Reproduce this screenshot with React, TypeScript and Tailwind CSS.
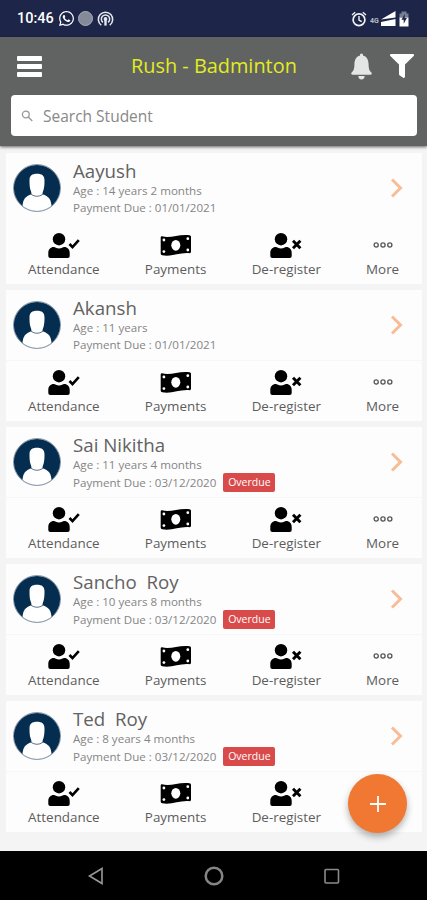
import type { ReactNode } from 'react'
import { FaFilter, FaWhatsapp } from 'react-icons/fa'
import { IoIosNotifications } from 'react-icons/io'

interface Student {
  name: string
  age: string
  due: string
  overdue?: boolean
}

const STUDENTS: Student[] = [
  { name: 'Aayush', age: '14 years 2 months', due: '01/01/2021' },
  { name: 'Akansh', age: '11 years', due: '01/01/2021' },
  { name: 'Sai Nikitha', age: '11 years 4 months', due: '03/12/2020', overdue: true },
  { name: 'Sancho  Roy', age: '10 years 8 months', due: '03/12/2020', overdue: true },
  { name: 'Ted  Roy', age: '8 years 4 months', due: '03/12/2020', overdue: true },
]

function PersonShape() {
  return (
    <>
      <circle cx="11" cy="6.200" r="6.200" />
      <path d="M.3 23v-3C.3 16.500 2.500 14 5.800 14c1.500 0 2.500 1.400 5.200 1.400S14.700 14 16.200 14c3.300 0 5.500 2.500 5.500 6v3q0 2-2 2H2.300q-2 0-2-2z" />
    </>
  )
}

function UserCheckIcon() {
  return (
    <svg width="32" height="25" viewBox="0 0 32 25" className="block">
      <PersonShape />
      <path d="M21.500 11l3 3.200 6.300-7" fill="none" stroke="#000" strokeWidth="2.600" />
    </svg>
  )
}

function UserTimesIcon() {
  return (
    <svg width="32" height="25" viewBox="0 0 32 25" className="block">
      <PersonShape />
      <path d="M23 7.700l7.400 7.600M30.400 7.700l-7.400 7.600" fill="none" stroke="#000" strokeWidth="2.900" />
    </svg>
  )
}

function BankNoteIcon() {
  return (
    <svg width="32" height="25" viewBox="0 0 32 25" className="block">
      <path d="M2 3.300C11 5.500 19 .8 29.500 2.200q1.500.3 1.500 1.600v15q0 1.500-1.500 1.400C19.500 19.300 12 24 2.200 22.300Q.7 22 .7 20.700V4.500Q.7 3.200 2 3.300z" />
      <g fill="#fff">
        <ellipse cx="15.800" cy="12.300" rx="4.500" ry="5.400" />
        <circle cx="3.900" cy="7" r="1.400" />
        <circle cx="27.800" cy="5.700" r="1.400" />
        <circle cx="3.900" cy="18.600" r="1.400" />
        <circle cx="27.800" cy="17" r="1.400" />
      </g>
    </svg>
  )
}

function MoreIcon() {
  return (
    <svg width="20" height="25" viewBox="0 0 20 25" className="block" fill="none" stroke="#555" strokeWidth="1.300">
      <circle cx="3.200" cy="12" r="2.100" />
      <circle cx="10" cy="12" r="2.100" />
      <circle cx="16.800" cy="12" r="2.100" />
    </svg>
  )
}

function Avatar() {
  return (
    <svg width="48" height="48" viewBox="0 0 48 48" className="block shrink-0">
      <defs>
        <clipPath id="avatar-clip">
          <circle cx="24" cy="24" r="23" />
        </clipPath>
      </defs>
      <circle cx="24" cy="24" r="23.500" fill="#fff" stroke="#8b9aaa" strokeWidth="1" />
      <circle cx="24" cy="24" r="23.100" fill="#052d50" />
      <g clipPath="url(#avatar-clip)" fill="#fff">
        <path d="M9.500 50V43c0-7 3-11 9-12.700h11c6 1.700 9 5.700 9 12.700v7z" />
        <path d="M24 9.800c5 0 7.500 2 7.500 6.500 0 4.500-.2 7.200-1 9.700-.7 1.800-1 2.500-1 4.800q-5.500 3.500-11 0c0-2.300-.3-3-1-4.800-.8-2.500-1-5.200-1-9.700 0-4.500 2.500-6.500 7.500-6.500z" />
        <path d="M18 30.300q6 4 12 0" fill="none" stroke="#5f7489" strokeWidth="1" />
      </g>
    </svg>
  )
}

function Action({ label, width, children }: { label: string; width: string; children: ReactNode }) {
  return (
    <div className={`flex flex-col items-center ${width}`}>
      {children}
      <span className="mt-[2px] text-[13.400px] leading-[19px] whitespace-nowrap text-[#5c5c5c]">{label}</span>
    </div>
  )
}

function StudentCard({ student }: { student: Student }) {
  return (
    <div className="group h-[131px] shrink-0 bg-[#fdfdfd]">
      <div className="flex h-[71px] items-start border-b border-[#f7f7f7] pt-[11px] pl-[7px] group-first:border-transparent">
        <Avatar />
        <div className="-mt-[5px] ml-3 flex-1">
          <h2 className="text-[18.700px] leading-6 whitespace-pre text-[#626262]">{student.name}</h2>
          <p className="-mt-px text-[11.600px] leading-[17px] text-[#858585]">Age : {student.age}</p>
          <div className="flex items-center text-[11.600px] leading-[18px] text-[#858585]">
            <span>Payment Due : {student.due}</span>
            {student.overdue && (
              <span className="ml-[7px] h-[19px] w-[52px] rounded-[2px] bg-[#d94b4b] text-center text-[10.500px] leading-[19px] text-white">
                Overdue
              </span>
            )}
          </div>
        </div>
        <svg width="14" height="22" viewBox="0 0 14 22" className="mt-[13px] mr-[18px] block shrink-0">
          <path d="M2 2.500l8.500 8.500L2 19.500" fill="none" stroke="#f8bd98" strokeWidth="3" />
        </svg>
      </div>
      <div className="flex pt-[9px]">
        <Action label="Attendance" width="w-[116px]"><UserCheckIcon /></Action>
        <Action label="Payments" width="w-[108px]"><BankNoteIcon /></Action>
        <Action label="De-register" width="w-[114px]"><UserTimesIcon /></Action>
        <Action label="More" width="w-[79px]"><MoreIcon /></Action>
      </div>
    </div>
  )
}

function StatusBar() {
  return (
    <div className="flex h-[37px] shrink-0 items-center bg-[#1d2648] pr-[18px] pl-[17px] text-white">
      <span className="font-[Roboto] text-[14.500px] font-medium">10:46</span>
      <FaWhatsapp className="ml-1 size-[17px]" />
      <span className="ml-[3px] size-[15px] rounded-full border border-[#a9aebd] bg-[#858a9b]" />
      <svg width="17" height="18" viewBox="0 0 18 18" className="ml-1" fill="none" stroke="#e6e8ef" strokeWidth="1.600">
        <path d="M4.500 15.500a7.600 7.600 0 1 1 9 0M6.300 12.600a4.400 4.400 0 1 1 5.400 0" />
        <circle cx="9" cy="9" r="1.200" fill="#e6e8ef" />
        <path d="M9 9v7" strokeWidth="2.500" />
      </svg>
      <svg width="16" height="16" viewBox="0 0 16 16" className="ml-auto" fill="none" stroke="#f2f3f6" strokeWidth="1.700">
        <circle cx="8" cy="8.700" r="5.900" />
        <path d="M8 5v4l2.700 1.600M1 4l3.200-2.700M15 4l-3.200-2.700" strokeWidth="1.400" />
      </svg>
      <span className="mt-1.5 ml-[3px] w-[9px] font-[Roboto] text-[7px] leading-none font-bold text-[#b9bdca]">4G</span>
      <svg width="29" height="17" viewBox="0 0 29 17" className="ml-px">
        <path d="M15.500 1v6.500L1 9.500zM1 12l14.500-3v7H1z" fill="#fff" />
        <path d="M21.500 1.500h5v2h2v4h-9v-4h2z" fill="#777d92" />
        <path d="M19.500 7.500h9v9h-9z" fill="#fff" />
        <path d="M24.700 4l-3.200 5.700h2.200v4l3.200-5.700h-2.200z" fill="#1d2648" />
      </svg>
    </div>
  )
}

function Header() {
  return (
    <header className="relative z-10 h-[109px] shrink-0 bg-[#616362] shadow-[0_1px_3px_rgba(0,0,0,0.6)]">
      <div className="flex h-[58px] items-center pl-[17px]">
        <div className="flex w-[25px] flex-col gap-[3px]">
          <span className="h-[5px] rounded-[1px] bg-white" />
          <span className="h-[5px] rounded-[1px] bg-white" />
          <span className="h-[5px] rounded-[1px] bg-white" />
        </div>
        <h1 className="ml-[89px] flex-1 text-[19.900px] whitespace-nowrap text-[#e2ec20]">Rush - Badminton</h1>
        <IoIosNotifications className="size-[33px] text-[#e4e5e5]" />
        <FaFilter className="mr-[13px] ml-[12px] size-[24px] text-white" />
      </div>
      <div className="mr-[10px] ml-[11px] flex h-[41px] items-center rounded bg-white pl-[10px]">
        <svg width="12" height="12" viewBox="0 0 12 12" fill="none" stroke="#999" strokeWidth="1.300">
          <circle cx="4.800" cy="4.500" r="3.400" />
          <path d="M7.300 7l4 4" />
        </svg>
        <span className="mt-0.5 ml-[10px] text-[15.500px] text-[#888]">Search Student</span>
      </div>
    </header>
  )
}

function NavBar() {
  return (
    <nav className="flex h-[49px] shrink-0 items-center justify-between bg-black px-[86px]">
      <svg width="20" height="20" viewBox="0 0 20 20" fill="none" stroke="#999" strokeWidth="1.600">
        <path d="M16 2.500v15L3.500 10z" />
      </svg>
      <svg width="20" height="20" viewBox="0 0 20 20" fill="none" stroke="#858585" strokeWidth="2.500">
        <circle cx="10" cy="10" r="8.300" />
      </svg>
      <svg width="20" height="20" viewBox="0 0 20 20" fill="none" stroke="#8a8a8a" strokeWidth="1.600">
        <rect x="4" y="3.500" width="13.500" height="13.500" rx="1" />
      </svg>
    </nav>
  )
}

export default function App() {
  return (
    <div className="relative flex h-[900px] w-[427px] flex-col overflow-hidden bg-[#f4f4f4] font-['Open_Sans','Noto_Sans',sans-serif]">
      <StatusBar />
      <Header />
      <main className="flex flex-1 flex-col gap-1.5 pt-[7px] pr-[5px] pl-[6px]">
        {STUDENTS.map((s) => (
          <StudentCard key={s.name} student={s} />
        ))}
      </main>
      <button className="absolute top-[774px] left-[348px] flex size-[59px] items-center justify-center rounded-full bg-[#f07832] shadow-[0_4px_7px_rgba(0,0,0,0.3)]">
        <svg width="16" height="16" viewBox="0 0 16 16" stroke="#fff" strokeWidth="1.800">
          <path d="M8 0v16M0 8h16" />
        </svg>
      </button>
      <NavBar />
    </div>
  )
}
